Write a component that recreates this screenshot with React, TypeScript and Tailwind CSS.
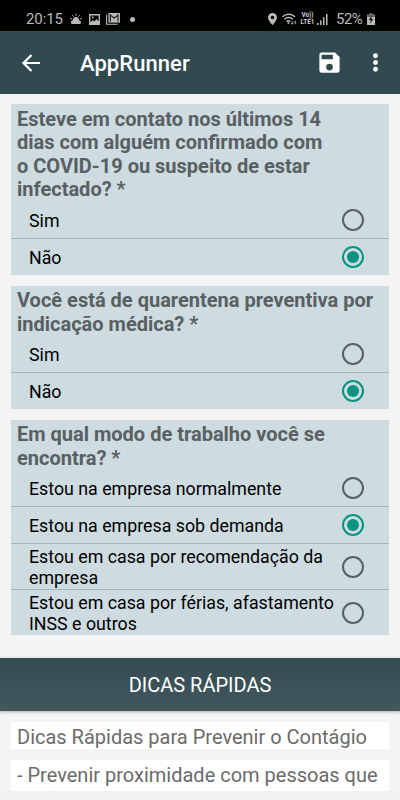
import { useState } from "react";

interface Question {
  id: string;
  title: string[];
  options: string[][];
  initial: number;
}

const questions: Question[] = [
  {
    id: "contato",
    title: [
      "Esteve em contato nos últimos 14",
      "dias com alguém confirmado com",
      "o COVID-19 ou suspeito de estar",
      "infectado? *",
    ],
    options: [["Sim"], ["Não"]],
    initial: 1,
  },
  {
    id: "quarentena",
    title: ["Você está de quarentena preventiva por", "indicação médica? *"],
    options: [["Sim"], ["Não"]],
    initial: 1,
  },
  {
    id: "trabalho",
    title: ["Em qual modo de trabalho você se", "encontra? *"],
    options: [
      ["Estou na empresa normalmente"],
      ["Estou na empresa sob demanda"],
      ["Estou em casa por recomendação da", "empresa"],
      ["Estou em casa por férias, afastamento", "INSS e outros"],
    ],
    initial: 1,
  },
];

const StatusBar = () => (
  <div className="flex h-[31px] shrink-0 items-center bg-black pt-[7px] text-[#b9b9b9]">
    <span className="ml-[26px] w-[44px] text-[15px] leading-none tracking-[-0.1px]">20:15</span>
    {/* pogoda */}
    <svg className="h-3 w-3" viewBox="0 0 12 12" fill="currentColor">
      <path d="M3 7a3 3 0 0 1 6 0z" />
      <path d="M6 .8v2M2.2 2.2l1.3 1.4M9.8 2.2 8.5 3.6M.4 5.4l1.7.6M11.6 5.4l-1.7.6" stroke="currentColor" strokeWidth="1" />
      <path d="M2.2 11a1.8 1.8 0 0 1 .2-3.5A3 3 0 0 1 8 7a2 2 0 0 1 2 1 1.6 1.6 0 0 1 0 3z" />
    </svg>
    <svg className="ml-[7px] h-[11px] w-[11px]" viewBox="0 0 11 11">
      <path fillRule="evenodd" fill="currentColor" d="M0 0h11v11H0zM1.4 1.4v7.2l2.3-2.7 1.5 1.5L7.6 5l2 2.6V1.4zM3 2.6h1.6v1.6H3z" />
    </svg>
    <svg className="ml-1.5 h-3 w-[14px]" viewBox="0 0 14 12">
      <path d="M.6 1.5v9.8h11" fill="none" stroke="currentColor" strokeWidth="1.1" />
      <path d="M2.4 0H14v9.6H2.4z" fill="currentColor" />
      <path d="M4.4 8.6V2l3.8 3.2L12 2v6.6" fill="none" stroke="#222" strokeWidth="1.2" />
    </svg>
    <span className="ml-[10px] h-[5px] w-[5px] rounded-full bg-[#b9b9b9]" />
    <span className="grow" />
    <svg className="h-3 w-[9px]" viewBox="0 0 9 12">
      <path fillRule="evenodd" fill="currentColor" d="M4.5 0A4.4 4.4 0 0 0 0 4.4C0 7.6 4.5 12 4.5 12S9 7.6 9 4.4A4.4 4.4 0 0 0 4.5 0zM4.5 2.7a1.8 1.8 0 1 1 0 3.6 1.8 1.8 0 0 1 0-3.6z" />
    </svg>
    <svg className="ml-[5px] h-3 w-[15px]" viewBox="0 0 15 12" fill="none" stroke="currentColor">
      <path d="M.4 3.8a9 9 0 0 1 12.6 0M2.4 6.2a6.2 6.2 0 0 1 8.4 0M4.4 8.5a3.4 3.4 0 0 1 4 0" strokeWidth="1.5" />
      <circle cx="6.4" cy="10.1" r="1" fill="currentColor" stroke="none" />
      <path d="M10.2 8.4v2.8M9.2 10.2l1 1 1-1M13.2 11.2V8.2M12.2 9.3l1-1 1 1" strokeWidth=".9" />
    </svg>
    <span className="ml-[3px] flex w-[15px] flex-col items-center text-[6.3px] font-bold leading-[7px] text-[#d0d0d0]">
      <span>Vo))</span>
      <span>LTE1</span>
    </span>
    <svg className="ml-[2px] h-[11px] w-[11px]" viewBox="0 0 11 11" fill="currentColor">
      <path d="M0 9h1.5v2H0zM3 6.3h1.5V11H3zM6 3.3h1.5V11H6zM9 0h1.5v11H9z" />
    </svg>
    <span className="ml-2 w-[28px] text-[15px] leading-none tracking-[-0.5px]">52%</span>
    <svg className="ml-[3px] mr-[25px] h-[12px] w-[8px]" viewBox="0 0 8 12">
      <path d="M2.5 0h3v1.2H8V4H0V1.2h2.5z" fill="#666" />
      <path d="M0 4h8v8H0z" fill="currentColor" />
      <path d="M4.8 2.6 1.8 7h1.9l-.5 3.4L6.3 6H4.4z" fill="#111" />
    </svg>
  </div>
);

const Toolbar = () => (
  <header className="flex h-[63px] shrink-0 items-center bg-[#314a50] text-white">
    <button aria-label="Voltar" className="ml-[19px]">
      <svg className="block h-6 w-6" viewBox="0 0 24 24" fill="currentColor">
        <path d="M21 11H7.1l6.2-6.2-1.6-1.6L2.9 12l8.8 8.8 1.6-1.6L7.1 13H21z" />
      </svg>
    </button>
    <h1 className="ml-[37px] grow pt-[3px] text-[22px] font-medium leading-none tracking-[0.05px]">AppRunner</h1>
    <button aria-label="Salvar">
      <svg className="block h-[27px] w-[27px]" viewBox="0 0 24 24" fill="currentColor">
        <path d="M17 3H5a2 2 0 0 0-2 2v14a2 2 0 0 0 2 2h14c1.1 0 2-.9 2-2V7l-4-4zm-5 16a3 3 0 1 1 0-6 3 3 0 0 1 0 6zm3-10H5V5h10v4z" />
      </svg>
    </button>
    <button aria-label="Mais opções" className="ml-[19px] mr-[11px]">
      <svg className="block h-[27px] w-[27px]" viewBox="0 0 24 24" fill="currentColor">
        <circle cx="12" cy="6" r="2.2" />
        <circle cx="12" cy="12" r="2.2" />
        <circle cx="12" cy="18" r="2.2" />
      </svg>
    </button>
  </header>
);

const Radio = ({ checked }: { checked: boolean }) => (
  <span
    className={`flex h-[22px] w-[22px] shrink-0 items-center justify-center rounded-full border-2 ${
      checked ? "border-[#079582]" : "border-[#586063]"
    }`}
  >
    {checked && <span className="h-3 w-3 rounded-full bg-[#079582]" />}
  </span>
);

const QuestionCard = ({ title, options, initial }: Question) => {
  const [selected, setSelected] = useState(initial);

  return (
    <section className="bg-[#cedbe0] pt-[3.3px]">
      <h2 className="-mb-[0.3px] pl-1.5 text-[20px] font-bold leading-[23.6px] text-[#586063]">
        {title.map((line) => (
          <span key={line} className="block whitespace-nowrap">
            {line}
          </span>
        ))}
      </h2>
      <div role="radiogroup">
        {options.map((lines, i) => (
          <button
            key={lines[0]}
            role="radio"
            aria-checked={selected === i}
            onClick={() => setSelected(i)}
            className={`box-content flex w-[335px] items-center justify-between border-[#a9b7bd] pl-[18px] pr-[25px] text-left text-[17.8px] leading-[21px] text-black ${
              lines.length > 1 ? "h-[45px]" : "h-[36px]"
            } ${i < options.length - 1 ? "border-b" : ""}`}
          >
            <span className="pt-[1.2px]">
              {lines.map((line) => (
                <span key={line} className="block whitespace-nowrap">
                  {line}
                </span>
              ))}
            </span>
            <Radio checked={selected === i} />
          </button>
        ))}
      </div>
    </section>
  );
};

export default function App() {
  return (
    <div className="flex h-[800px] w-[400px] flex-col overflow-hidden bg-[#f4f4f4] font-['Roboto',sans-serif]">
      <StatusBar />
      <Toolbar />
      <main className="flex h-[697px] shrink-0 flex-col overflow-hidden">
        <div className="flex flex-col gap-[11.1px] px-[11px] pt-[10.4px]">
          {questions.map((q) => (
            <QuestionCard key={q.id} {...q} />
          ))}
        </div>
        <button className="mt-[22.2px] h-[53px] w-full shrink-0 bg-linear-to-b from-[#344b50] to-[#42585e] pt-[2px] text-[20px] text-white shadow-[0_1px_3px_rgba(0,0,0,0.3)]">
          DICAS RÁPIDAS
        </button>
        <div className="flex flex-col gap-[11px] px-[11px] pt-[11px] text-[20px] leading-[24px] text-[#6b6b6b]">
          <p className="h-[27px] whitespace-nowrap bg-white pl-1.5 pt-[3.5px]">Dicas Rápidas para Prevenir o Contágio</p>
          <p className="whitespace-nowrap bg-white pl-1.5 pt-[3px]">
            - Prevenir proximidade com pessoas que
            <br />
            estão doentes
          </p>
        </div>
      </main>
      <div className="grow bg-[#f1f1f1]" />
    </div>
  );
}
